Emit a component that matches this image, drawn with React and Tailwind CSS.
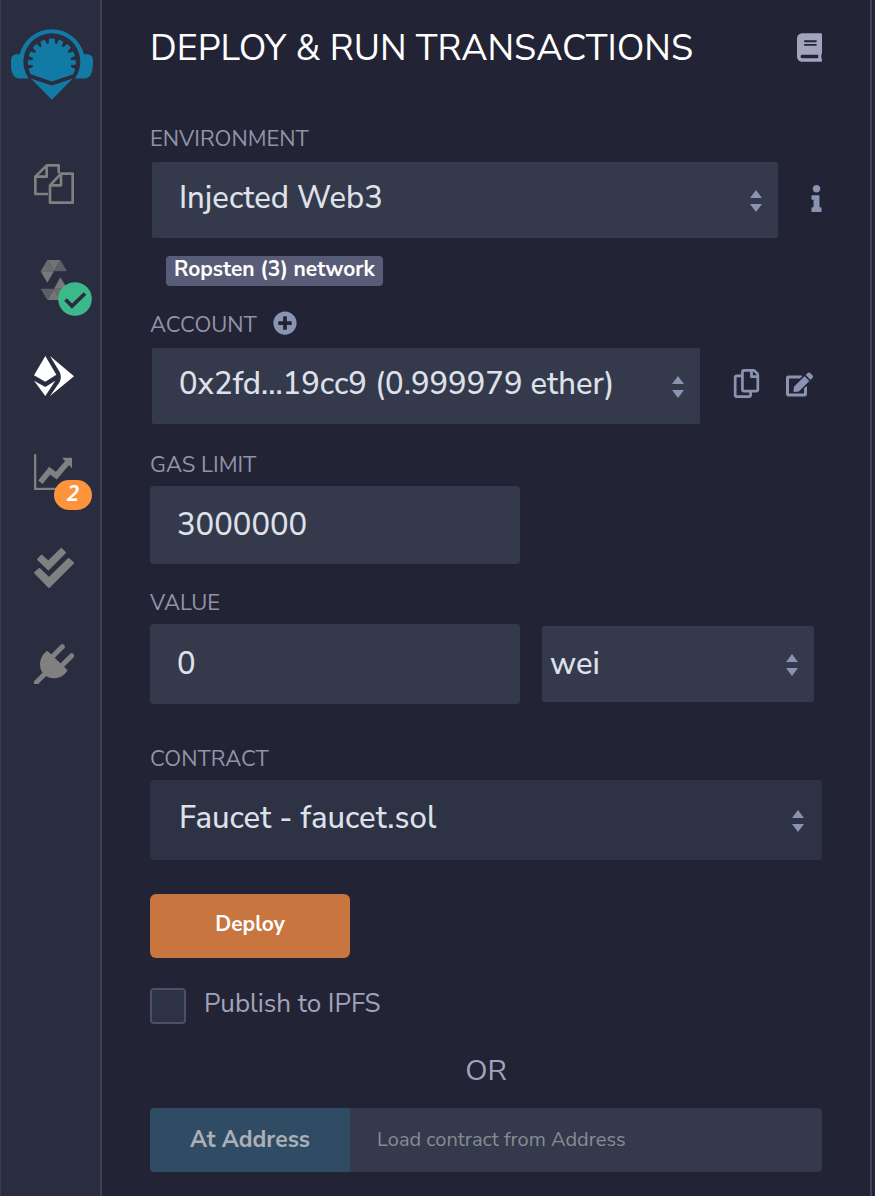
import React from "react";
import { FaBook, FaInfo, FaPlusCircle, FaRegCopy, FaEdit } from "react-icons/fa";

function Logo() {
  const notches = [-100, -79, -57, -34, -12, 12, 34, 57, 79, 100];
  return (
    <svg viewBox="33 87 245 211" className="h-[71px] w-[82px]" aria-hidden="true">
      <g fill="#127ba5">
        <path d="M59 162 A99 99 0 0 1 251 162 L262 162 Q278 164 278 180 L277 202 Q274 234 252 234 L224 234 A85 85 0 1 0 86 234 L58 234 Q36 234 33 202 L33 180 Q33 164 48 162 Z" />
        <path d="M92 222 Q83 205 83 187 A72 72 0 0 1 227 187 Q227 205 219 222 L155 243 Z" />
        <path d="M92 234 L155 255 L218 234 L155 298 Z" />
      </g>
      <g fill="#2a2c3f">
        {notches.map((a) => (
          <path key={a} d="M148 112 L162 112 L158 129 L152 129 Z" transform={`rotate(${a} 155 187)`} />
        ))}
      </g>
    </svg>
  );
}

function FilesIcon() {
  return (
    <svg viewBox="0 0 120 120" className="size-10" fill="none" stroke="#808080" strokeWidth="8" strokeLinejoin="round" aria-hidden="true">
      <path d="M42 90 H4 V38 L38 4 H74 V28 M38 4 V38 H4" />
      <path d="M48 64 L81 29 H116 V116 H48 Z M81 29 V64 H48" />
    </svg>
  );
}

function SolidityIcon() {
  return (
    <svg viewBox="0 0 120 120" className="size-10" aria-hidden="true">
      <path fill="#6b6b6f" d="M20 34 L40 0 L60 34 Z M100 86 L79 120 L60 86 Z" />
      <path fill="#737376" d="M40 0 H79 L60 34 Z M79 120 H40 L60 86 Z" />
      <path fill="#5d5f68" d="M79 0 L99 34 H60 Z M40 120 L20 86 H60 Z" />
      <path fill="#78787a" d="M20 34 H60 L40 68 Z M100 86 H60 L79 52 Z" />
    </svg>
  );
}

function DeployIcon() {
  return (
    <svg viewBox="0 0 120 120" className="size-10" fill="#fff" aria-hidden="true">
      <path d="M34 0 L67 56 L34 77 L0 58 Z" />
      <path d="M0 74 L34 93 L64 74 L34 120 Z" />
      <path d="M48 0 L120 61 L48 120 L77 78 Q84 62 77 48 Z" />
    </svg>
  );
}

function ChartIcon() {
  return (
    <svg viewBox="0 0 120 120" className="size-10" aria-hidden="true">
      <path fill="none" stroke="#808080" strokeWidth="7" d="M3.500 7 V110.500 H114" />
      <path fill="none" stroke="#808080" strokeWidth="17" d="M19 91 L47 56 L67 71 L102 30" />
      <path fill="#808080" d="M84 17 H114 V49 Z" />
    </svg>
  );
}

function ChecksIcon() {
  return (
    <svg viewBox="0 0 120 120" className="size-10" fill="#808080" stroke="#808080" strokeWidth="6" strokeLinejoin="round" aria-hidden="true">
      <path d="M12 34 L23 23 L43 41 L82 3 L93 14 L43 64 Z" />
      <path d="M3 74 L16 63 L45 91 L104 33 L117 45 L45 117 Z" />
    </svg>
  );
}

function PlugIcon() {
  return (
    <svg viewBox="0 0 120 120" className="size-10" aria-hidden="true">
      <path fill="#808080" d="M40 20 L101 79 C90 96 75 103 60 103 C48 103 41 100 33 94 C22 84 18 74 18 60 C18 44 26 30 40 20 Z" />
      <g fill="none" stroke="#808080" strokeWidth="15" strokeLinecap="round">
        <path d="M54 39 L85 8 M83 65 L113 35" />
        <path d="M36 86 L2 120" />
      </g>
    </svg>
  );
}

function Carets({ className }) {
  return (
    <svg viewBox="0 0 12 24" className={`pointer-events-none absolute h-6 w-3 ${className}`} fill="#8b93b3" aria-hidden="true">
      <path d="M6 1 L12 9 H0 Z M0 15 H12 L6 23 Z" />
    </svg>
  );
}

function Label({ htmlFor, children }) {
  return (
    <label htmlFor={htmlFor} className="block text-[22px] leading-[30px] text-[#9293a8]">
      {children}
    </label>
  );
}

const navItem = "relative flex size-10 items-center justify-center";

export default function App() {
  return (
    <div className="flex min-h-screen bg-[#222334] pr-[3px] font-['Nunito_Sans','Nunito','Lato',sans-serif] text-[#a2a3bd]">
      <nav aria-label="Plugins" className="w-[102px] shrink-0 border-l border-r-2 border-l-[#3a3c50] border-r-[#3f4157] bg-[#2a2c3f]">
        <a href="#home" aria-label="Home" className="mt-[29px] ml-2.5 block">
          <Logo />
        </a>
        <div className="mt-16 ml-[33px] flex flex-col gap-14">
          <button type="button" aria-label="File explorers" className={navItem}>
            <FilesIcon />
          </button>
          <button type="button" aria-label="Solidity compiler" className={navItem}>
            <SolidityIcon />
            <svg viewBox="0 0 34 34" className="absolute top-[22px] left-6 size-[34px]" aria-hidden="true">
              <circle cx="17" cy="17" r="16.800" fill="#3cb98a" />
              <path d="M7.500 17.500 L14 24 L27 11.500" fill="none" stroke="#2a2c3f" strokeWidth="3.800" />
            </svg>
          </button>
          <button type="button" aria-label="Deploy and run transactions" className={navItem}>
            <DeployIcon />
          </button>
          <button type="button" aria-label="Analysis" className={navItem}>
            <ChartIcon />
            <span className="absolute top-7 left-5 h-[30px] w-[38px] rounded-full bg-[#fd933b] text-center font-['Noto_Sans',sans-serif] text-[22px] leading-6 font-semibold text-white italic">
              2
            </span>
          </button>
          <button type="button" aria-label="Unit testing" className={navItem}>
            <ChecksIcon />
          </button>
          <button type="button" aria-label="Plugin manager" className={navItem}>
            <PlugIcon />
          </button>
        </div>
      </nav>

      <main className="min-w-0 flex-1 border-r-2 border-[#3f4455] px-12 pt-6 pb-6">
        <header className="flex items-center justify-between">
          <h1 className="text-4xl leading-[50px] whitespace-nowrap text-white">DEPLOY &amp; RUN TRANSACTIONS</h1>
          <a href="#docs" aria-label="Documentation" className="pb-1">
            <FaBook className="h-[29px] w-[25px] text-[#a2a3bd]" />
          </a>
        </header>

        <section className="mt-[50px]">
          <Label htmlFor="environment">ENVIRONMENT</Label>
          <div className="mt-2 flex items-center pl-0.5">
            <div className="relative flex-1">
              <select id="environment" className="block h-[76px] w-full appearance-none rounded-xs bg-[#343a4b] pr-12 pb-1 pl-[27px] text-[31px] font-medium text-[#dfe1ea]">
                <option>Injected Web3</option>
              </select>
              <Carets className="top-[27px] right-4" />
            </div>
            <a href="#info" aria-label="Environment info" className="flex w-11 justify-end pb-1">
              <FaInfo className="h-[27px] w-[11px] text-[#8b93b3]" />
            </a>
          </div>
          <div className="mt-[18px] pl-4">
            <span className="inline-block h-[30px] rounded-sm bg-[#595c76] px-2 align-top text-[21px] leading-[26px] font-bold text-white">
              Ropsten (3) network
            </span>
          </div>
        </section>

        <section className="mt-6">
          <div className="flex items-start gap-4">
            <Label htmlFor="account">ACCOUNT</Label>
            <button type="button" aria-label="Create account" className="flex h-[26px] items-center">
              <FaPlusCircle className="size-6 text-[#8b93b3]" />
            </button>
          </div>
          <div className="mt-2 flex items-center pl-0.5">
            <div className="relative flex-1">
              <select id="account" className="block h-[76px] w-full appearance-none rounded-xs bg-[#343a4b] pr-12 pb-1 pl-[27px] text-[31px] font-medium text-[#dfe1ea]">
                <option>0x2fd...19cc9 (0.999979 ether)</option>
              </select>
              <Carets className="top-[27px] right-4" />
            </div>
            <div className="flex w-[122px] items-end gap-[25px] pb-1.5 pl-8">
              <button type="button" aria-label="Copy account">
                <FaRegCopy className="size-[29px] text-[#8b93b3]" />
              </button>
              <button type="button" aria-label="Sign a message">
                <FaEdit className="size-[27px] text-[#8b93b3]" />
              </button>
            </div>
          </div>
        </section>

        <section className="mt-[26px]">
          <Label htmlFor="gas">GAS LIMIT</Label>
          <input id="gas" type="text" defaultValue="3000000" className="mt-1.5 block h-[78px] w-[370px] rounded-sm bg-[#343a4b] px-[27px] text-[31px] font-medium text-[#dfe1ea]" />
        </section>

        <section className="mt-6">
          <Label htmlFor="value">VALUE</Label>
          <div className="mt-1.5 flex items-center gap-[22px] pr-2">
            <input id="value" type="text" defaultValue="0" className="block h-20 w-[370px] rounded-sm bg-[#343a4b] px-[27px] text-[31px] font-medium text-[#dfe1ea]" />
            <div className="relative flex-1">
              <select aria-label="Unit" className="block h-[76px] w-full appearance-none rounded-xs bg-[#343a4b] pr-12 pl-2 text-[31px] font-medium text-[#dfe1ea]">
                <option>wei</option>
              </select>
              <Carets className="top-[27px] right-4" />
            </div>
          </div>
        </section>

        <section className="mt-10">
          <Label htmlFor="contract">CONTRACT</Label>
          <div className="relative mt-1.5">
            <select id="contract" className="block h-20 w-full appearance-none rounded-sm bg-[#2d3245] pr-14 pb-1 pl-[29px] text-[31px] font-medium text-[#dfe1ea]">
              <option>Faucet - faucet.sol</option>
            </select>
            <Carets className="top-[29px] right-[18px]" />
          </div>
        </section>

        <button type="button" className="mt-[34px] block h-16 w-[200px] rounded-md bg-[#c87540] pb-0.5 text-[21px] font-bold text-white">
          Deploy
        </button>

        <div className="mt-[30px] flex items-center gap-[18px]">
          <input id="ipfs" type="checkbox" className="size-9 appearance-none rounded-sm border-2 border-[#4d4f68] bg-[#2d3245] checked:bg-[#127ba5]" />
          <label htmlFor="ipfs" className="pb-1 text-[26px] leading-8">
            Publish to IPFS
          </label>
        </div>

        <p className="mt-7 text-center text-[29px] leading-[38px]">OR</p>

        <div className="mt-[18px] flex">
          <button type="button" className="h-16 w-[200px] rounded-l-sm bg-[#304b64] text-[23px] font-bold text-[#adafb7]">
            At Address
          </button>
          <input
            type="text"
            aria-label="Contract address"
            placeholder="Load contract from Address"
            className="h-16 min-w-0 flex-1 rounded-r-sm bg-[#343a4b] px-[27px] pb-0.5 text-xl text-[#dfe1ea] placeholder:text-[#868b95]"
          />
        </div>
      </main>
    </div>
  );
}
